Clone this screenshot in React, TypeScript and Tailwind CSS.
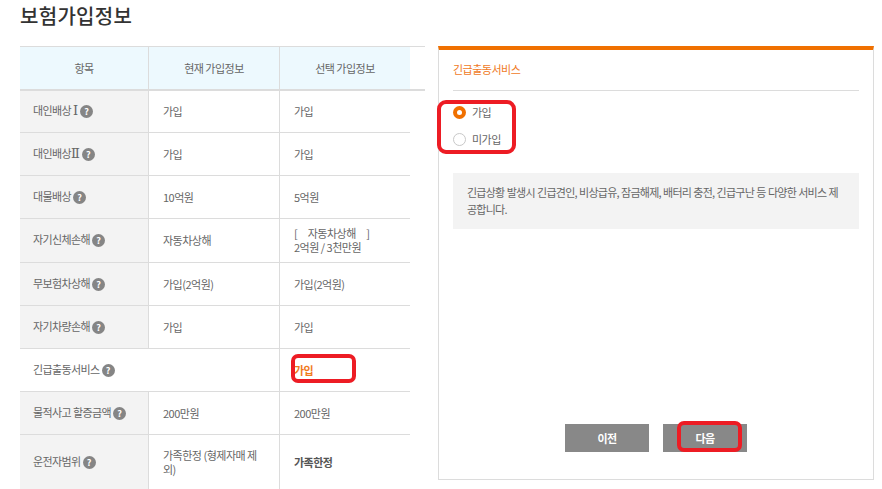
const font = { fontFamily: '"Noto Sans CJK KR", "Noto Sans", sans-serif' };

function Help() {
  return (
    <span className="ml-[2px] inline-flex h-[13px] w-[13px] shrink-0 items-center justify-center rounded-full bg-[#858585] text-[9px] leading-none font-bold tracking-normal text-white">
      ?
    </span>
  );
}

function Numeral({ children }: { children: string }) {
  return <span className="font-['DejaVu_Serif'] text-[13px] leading-none tracking-normal">{children}</span>;
}

const rows = [
  { id: 1, name: <>대인배상 <Numeral>Ⅰ</Numeral></>, now: "가입", next: "가입", h: "h-[42px]" },
  { id: 2, name: <>대인배상<Numeral>Ⅱ</Numeral></>, now: "가입", next: "가입", h: "h-[43px]" },
  { id: 3, name: "대물배상", now: "10억원", next: "5억원", h: "h-[43px]" },
  { id: 4, name: "자기신체손해", now: "자동차상해", next: "[　자동차상해　]\n2억원 / 3천만원", h: "h-[44px]" },
  { id: 5, name: "무보험차상해", now: "가입(2억원)", next: "가입(2억원)", h: "h-[43px]" },
  { id: 6, name: "자기차량손해", now: "가입", next: "가입", h: "h-[43px]" },
];

function Row({ name, now, next, h }: { name: React.ReactNode; now: string; next: React.ReactNode; h: string }) {
  return (
    <div className={`flex ${h} border-b border-[#dcdcdc]`}>
      <div className="flex w-[128px] items-center bg-[#f3f3f3] pl-[13px] tracking-[-0.6px]">
        <span className="-mt-[2px]">{name}</span>
        <Help />
      </div>
      <div className="flex w-[132px] items-center border-x border-[#dcdcdc] pr-[20px] pl-[14px] leading-[14px] break-all">
        <span className="-mt-[1px]">{now}</span>
      </div>
      <div className="flex w-[130px] items-center pl-[14px] leading-[14px] whitespace-pre-line">
        <span className="-mt-[1px]">{next}</span>
      </div>
    </div>
  );
}

export default function App() {
  return (
    <main
      style={font}
      className="h-[489px] w-[882px] overflow-hidden bg-white pl-[20px] text-[11px] tracking-[-0.5px] text-[#666]"
    >
      <h1 className="h-[46px] pt-[2px] text-[20px] leading-[28px] font-medium tracking-[0.3px] text-[#333]">
        보험가입정보
      </h1>
      <div className="flex items-start">
        <section className="w-[405px]">
          <div className="flex h-[45px] border-y border-b-2 border-y-[#dcdcdc]">
            <div className="flex w-[128px] items-center justify-center bg-[#edf9fe]">항목</div>
            <div className="flex w-[132px] items-center justify-center border-x border-[#dcdcdc] bg-[#edf9fe]">
              현재 가입정보
            </div>
            <div className="flex w-[130px] items-center justify-center bg-[#edf9fe]">선택 가입정보</div>
          </div>
          <div className="w-[390px]">
            {rows.map((r) => (
              <Row key={r.id} name={r.name} now={r.now} next={r.next} h={r.h} />
            ))}
            <div className="flex h-[43px] border-b border-[#dcdcdc]">
              <div className="flex w-[260px] items-center border-r border-[#dcdcdc] pl-[13px] tracking-[-0.6px]">
                <span className="-mt-[2px]">긴급출동서비스</span>
                <Help />
              </div>
              <div className="relative flex w-[130px] items-center pl-[14px] font-bold text-[#f07a1e]">
                가입
                <span className="absolute top-[5px] left-[11px] h-[29px] w-[65px] rounded-[7px] border-[4px] border-[#ed1c24]" />
              </div>
            </div>
            <Row name="물적사고 할증금액" now="200만원" next="200만원" h="h-[43px]" />
            <Row
              name="운전자범위"
              now="가족한정 (형제자매 제외)"
              next={<b className="font-bold text-[#555]">가족한정</b>}
              h="h-[55px]"
            />
          </div>
        </section>
        <section className="ml-[13px] flex h-[434px] w-[436px] flex-col border-x border-t-[4px] border-b border-x-[#dcdcdc] border-t-[#f07000] border-b-[#dcdcdc] px-[14px]">
          <h2 className="h-[41px] shrink-0 border-b border-[#dcdcdc] pt-[11px] leading-[16px] text-[#f07a1e]">
            긴급출동서비스
          </h2>
          <div className="relative flex flex-col gap-[14px] pt-[15px]">
            <label className="flex h-[13px] items-center gap-[6px]">
              <span className="flex h-[13px] w-[13px] items-center justify-center rounded-full bg-[#f07000]">
                <span className="h-[5px] w-[5px] rounded-full bg-white" />
              </span>
              가입
            </label>
            <label className="flex h-[13px] items-center gap-[6px]">
              <span className="h-[13px] w-[13px] rounded-full border border-[#c8c8c8]" />
              미가입
            </label>
            <span className="absolute top-[9px] -left-[16px] h-[54px] w-[79px] rounded-[9px] border-[4px] border-[#ed1c24]" />
          </div>
          <p className="mt-[27px] h-[56px] bg-[#f3f3f3] pt-[11px] pr-[20px] pl-[14px] leading-[17px] tracking-[-0.75px] [word-spacing:0.5px] break-all">
            긴급상황 발생시 긴급견인, 비상급유, 잠금해제, 배터리 충전, 긴급구난 등 다양한 서비스 제공합니다.
          </p>
          <div className="mt-[195px] flex justify-center gap-[14px] text-white">
            <button className="h-[28px] w-[84px] bg-[#888] text-[11px] font-bold">이전</button>
            <div className="relative">
              <button className="h-[28px] w-[84px] bg-[#888] text-[11px] font-bold">다음</button>
              <span className="absolute -top-[3px] left-[14px] h-[31px] w-[65px] rounded-[7px] border-[4px] border-[#ed1c24]" />
            </div>
          </div>
        </section>
      </div>
    </main>
  );
}
